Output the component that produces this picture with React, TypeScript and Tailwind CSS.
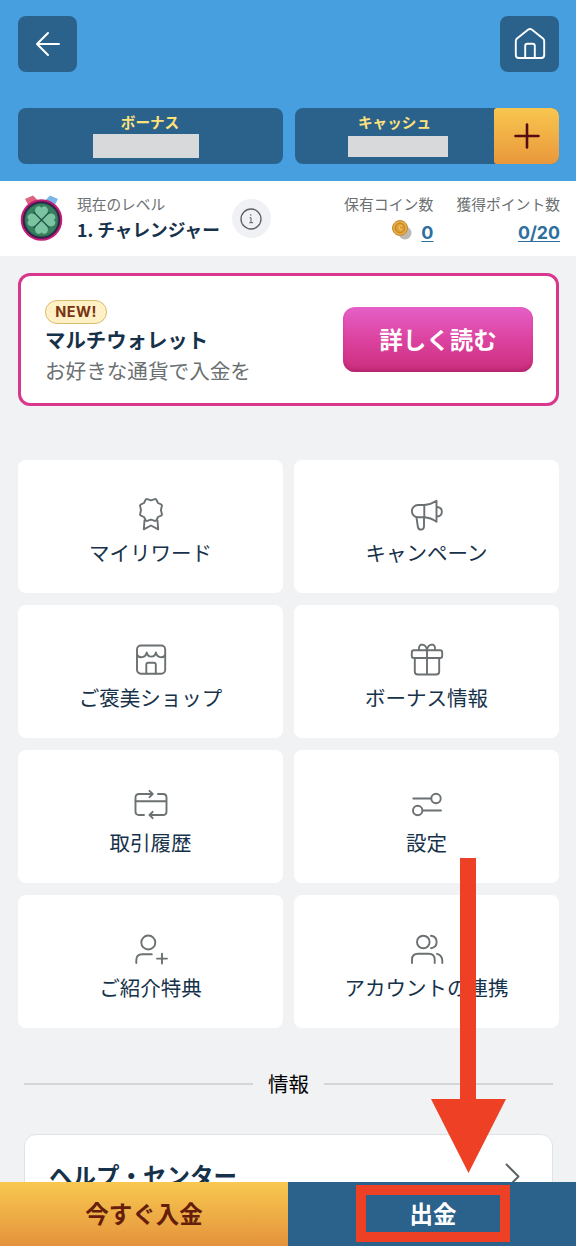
import type { ReactNode } from "react";

function Icon({ children }: { children: ReactNode }) {
  return (
    <svg width="36" height="36" viewBox="0 0 36 36" fill="none" stroke="#6b7072" strokeWidth="1.9" strokeLinecap="round" strokeLinejoin="round">
      {children}
    </svg>
  );
}

const MENU: { label: string; icon: ReactNode }[] = [
  {
    label: "マイリワード",
    icon: (
      <>
        <path d="M18 4.300 21.800 3.100Q23 2.800 23.500 4L25 7l3 1.300q1.200.6.900 1.700l-1 4 1 4q.3 1.100-.9 1.700L25 21l-1.500 3q-.5 1.200-1.700.9L18 23.700l-3.800 1.200q-1.200.3-1.700-.9L11 21l-3-1.300Q6.800 19.100 7.100 18L8 14l-.9-4Q6.800 8.900 8 8.300L11 7l1.500-3q.5-1.200 1.700-.9Z" />
        <path d="M11.500 24.500 10.800 33.300l7.200-3.800 7.200 3.800-.7-8.800" />
      </>
    ),
  },
  {
    label: "キャンペーン",
    icon: (
      <>
        <path d="M15.300 9H9a6.150 6.150 0 0 0 0 12.300h6.300V9Z" />
        <path d="M15.300 9c4.800-.2 8.600-1.800 12.200-4.200v21c-3.600-2.500-7.400-4.200-12.200-4.500" />
        <path d="M28 11c6.500.5 6.500 9 0 9.500M7.500 21.500l1.300 9c.7 4.300 6.200 4 6.200-.2v-9" />
      </>
    ),
  },
  {
    label: "ご褒美ショップ",
    icon: (
      <>
        <rect x="4" y="4.500" width="28.200" height="28.200" rx="4" />
        <path d="M4.300 14c1.700 3.300 8.200 3.300 9.400-2.500 1.200 5.500 8 5.500 9.200 0 1.200 5.800 7.600 5.800 9.200 2.500M13.300 32.500v-8.800q0-2 2-2h5.500q2 0 2 2v8.800" />
      </>
    ),
  },
  {
    label: "ボーナス情報",
    icon: (
      <>
        <rect x="2.800" y="9.300" width="30.400" height="7.700" rx="2" />
        <path d="M5.800 17v13.500q0 3 3 3h18.400q3 0 3-3V17M18 9.300v24.200M18 9.300C17 2 9 1.500 10 8.800M18 9.300c1-7.300 9-7.800 8-.5" />
      </>
    ),
  },
  {
    label: "取引履歴",
    icon: (
      <>
        <path d="M11 29H6q-3.500 0-3.500-3.500v-14Q2.500 8 6 8h13.500M16.500 4.800 19.700 8l-3.200 3.200" />
        <path d="M25 8h5q3.500 0 3.500 3.500v14q0 3.500-3.500 3.500H16.500M19.700 25.800 16.500 29l3.200 3.200M2.500 15.300h31" />
      </>
    ),
  },
  {
    label: "設定",
    icon: (
      <>
        <path d="M4.300 12.500h18M13.500 24.500H32" />
        <circle cx="27" cy="12.500" r="4.700" />
        <circle cx="8.700" cy="24.500" r="4.700" />
      </>
    ),
  },
  {
    label: "ご紹介特典",
    icon: (
      <>
        <circle cx="15.300" cy="11.500" r="7" />
        <path d="M3.300 32v-2.700q0-6 6-6h9.500M24 27.600h10M29 22.600v10" />
      </>
    ),
  },
  {
    label: "アカウントの連携",
    icon: (
      <>
        <circle cx="14.300" cy="11" r="6.300" />
        <path d="M22 4.800c7.500 1.200 7.500 11.200 0 12.400M3 32v-3.200q0-6 6-6h10.700q6 0 6 6V32M28 22.800q5.300 1.400 5.300 7V32" />
      </>
    ),
  },
];

function Medal() {
  return (
    <svg width="44" height="48" viewBox="0 0 44 48">
      <path d="m5 4 8-3.500 5 5-9 6z" fill="#dc647f" />
      <path d="m38 4-8-3.500-5 5 9 6z" fill="#78b8e8" />
      <circle cx="21.500" cy="25" r="19.500" fill="#286b58" stroke="#c51c79" strokeWidth="2.500" />
      <circle cx="21.500" cy="25" r="17.800" fill="none" stroke="#3a2148" strokeWidth="2" />
      <circle cx="21.500" cy="25" r="16" fill="#37805f" />
      <g fill="#7cc3a1" transform="rotate(0 21.500 25)">
        <path id="leaf" d="M21.500 24c-5-3.500-7.500-7-6-10.500 1.500-3 4.500-3 6-.8 1.500-2.200 4.500-2.200 6 .8 1.500 3.500-1 7-6 10.500Z" />
        <use href="#leaf" transform="rotate(90 21.500 25)" />
        <use href="#leaf" transform="rotate(180 21.500 25)" />
        <use href="#leaf" transform="rotate(270 21.500 25)" />
      </g>
      <path d="m13.500 17 16 16m0-16-16 16" stroke="#245c4b" strokeWidth="1.300" />
    </svg>
  );
}

function Header() {
  return (
    <header className="h-[181px] bg-[#489fdf] pt-[16px] pr-[17px] pl-[18px]">
      <div className="flex justify-between">
        <button className="flex h-[56px] w-[59px] items-center justify-center rounded-lg bg-[#2b628c]">
          <svg width="26" height="26" viewBox="0 0 26 26" fill="none" stroke="white" strokeWidth="2" strokeLinecap="round" strokeLinejoin="round">
            <path d="M24 13H2M13 2 2 13l11 11" />
          </svg>
        </button>
        <button className="flex h-[56px] w-[59px] items-center justify-center rounded-lg bg-[#2b628c]">
          <svg width="36" height="36" viewBox="0 0 36 36" fill="none" stroke="white" strokeWidth="1.900" strokeLinecap="round" strokeLinejoin="round">
            <path d="M3.800 15q0-1.500 1.200-2.500L16.300 3.600q1.700-1.300 3.400 0L31 12.500q1.200 1 1.200 2.500v14q0 3-3 3H6.800q-3 0-3-3Z" />
            <path d="M13.200 32V20q0-2.200 2.200-2.200h5.200q2.200 0 2.200 2.200v12" />
          </svg>
        </button>
      </div>
      <div className="mt-[36px] flex gap-[12px]">
        <div className="flex h-[56px] w-[265px] flex-col items-center rounded-lg bg-[#2b628c] pt-[3px] pr-[1px]">
          <span className="text-[14.600px] leading-[22px] font-bold text-[#ffe27a]">ボーナス</span>
          <div className="mt-[1px] mr-[8px] h-[24px] w-[106px] bg-[#d8d9da]" />
        </div>
        <div className="flex h-[56px] w-[264px] overflow-hidden rounded-lg bg-[#2b628c]">
          <div className="flex w-[199px] flex-col items-center pt-[3px]">
            <span className="text-[14.600px] leading-[22px] font-bold text-[#ffe27a]">キャッシュ</span>
            <div className="mt-[3px] ml-[7px] h-[21px] w-[100px] bg-[#d8d9da]" />
          </div>
          <button className="flex flex-1 items-center justify-center rounded-l-[3px] bg-linear-to-b from-[#f8c64f] to-[#e9983b]">
            <svg width="26" height="26" viewBox="0 0 26 26" stroke="#540c12" strokeWidth="2.600" strokeLinecap="round">
              <path d="M13 1.500v23M1.500 13h23" />
            </svg>
          </button>
        </div>
      </div>
    </header>
  );
}

function LevelBar() {
  return (
    <section className="flex h-[75px] bg-white pr-[16px] pl-[20px]">
      <div className="pt-[14px]">
        <Medal />
      </div>
      <div className="ml-[13px] w-[144px] pt-[12px] whitespace-nowrap">
        <p className="text-[14.700px] leading-[21px] text-[#6b7072]">現在のレベル</p>
        <p className="mt-[4px] text-[17.700px] leading-[22px] font-bold text-[#16324a]">1. チャレンジャー</p>
      </div>
      <div className="mt-[18px] ml-[11px] flex size-[39px] items-center justify-center rounded-full bg-[#f0f1f4]">
        <svg className="mr-[2px]" width="22" height="22" viewBox="0 0 22 22" fill="none" stroke="#5b5f63" strokeWidth="1.300">
          <circle cx="11" cy="11" r="10" />
          <path d="M9.700 9.700H11v5M9.300 14.700h3.800" strokeWidth="1" />
          <circle cx="10.800" cy="7" r=".7" fill="#5b5f63" stroke="none" />
        </svg>
      </div>
      <div className="ml-auto flex gap-[23px] pt-[12px] text-right">
        <div>
          <p className="text-[14.900px] leading-[21px] text-[#6b7072]">保有コイン数</p>
          <div className="mt-[8px] flex items-center justify-end gap-[9px]">
            <svg className="-mt-[6px]" width="20" height="20" viewBox="0 0 20 20">
              <circle cx="13" cy="13" r="6.500" fill="#bdb9b5" />
              <circle cx="8" cy="8" r="7.500" fill="#e7ad45" stroke="#c8862d" />
              <circle cx="8" cy="8" r="4.800" fill="#dc9f37" stroke="#bd8129" />
              <path d="M10 6Q7 4.500 7 7.300t3 2.500" fill="none" stroke="#f6cf71" />
            </svg>
            <a className="font-[Inter] text-[18px] leading-[22px] font-bold text-[#2e6f9e] underline underline-offset-2">0</a>
          </div>
        </div>
        <div>
          <p className="text-[14.800px] leading-[21px] text-[#6b7072]">獲得ポイント数</p>
          <a className="mt-[8px] block font-[Inter] text-[17.800px] leading-[22px] font-bold text-[#2e6f9e] underline underline-offset-2">0/20</a>
        </div>
      </div>
    </section>
  );
}

function Banner() {
  return (
    <section className="mt-[17px] flex h-[133px] items-center justify-between rounded-xl border-[3px] border-[#d8378d] bg-white pr-[23px] pl-[24px]">
      <div className="pt-[5px]">
        <span className="flex h-[24px] w-[62px] items-center justify-center rounded-full border-[1.500px] border-[#d9bd68] bg-[#fff1c5] font-[Inter] text-[14.500px] font-bold tracking-[0.400px] text-[#7a3413]">
          NEW!
        </span>
        <h2 className="text-[20.400px] leading-[31px] font-bold text-[#16324a]">マルチウォレット</h2>
        <p className="text-[20.600px] leading-[30px] text-[#6b7072]">お好きな通貨で入金を</p>
      </div>
      <button className="h-[65px] w-[190px] rounded-xl bg-linear-to-b from-[#e55fc8] via-[#dc429f] to-[#cb2d7d] text-[23.500px] font-bold text-white shadow-[inset_0_-4px_4px_-2px_#ae2569]">
        詳しく読む
      </button>
    </section>
  );
}

export default function App() {
  return (
    <div className="relative flex h-[1246px] w-[576px] flex-col overflow-hidden bg-[#f0f2f4] font-['Noto_Sans_CJK_JP',sans-serif]">
      <Header />
      <LevelBar />
      <main className="min-h-0 flex-1 overflow-hidden pr-[17px] pl-[18px]">
        <Banner />
        <div className="mt-[54px] grid grid-cols-2 gap-x-[11px] gap-y-[12px]">
          {MENU.map((item) => (
            <button key={item.label} className="flex h-[133px] flex-col items-center rounded-lg bg-white pt-[36px]">
              <Icon>{item.icon}</Icon>
              <span className="mt-[4px] text-[20.500px] leading-[32px] text-[#16324a]">{item.label}</span>
            </button>
          ))}
        </div>
        <div className="mt-[42px] flex items-center gap-[15px] px-[6px]">
          <div className="h-[2px] flex-1 bg-[#d4d7d9]" />
          <span className="-mt-[2px] text-[20.500px] leading-[30px] text-black">情報</span>
          <div className="h-[2px] flex-1 bg-[#d4d7d9]" />
        </div>
        <div className="mx-[6px] mt-[36px] flex h-[84px] items-center justify-between rounded-xl border border-[#e0e3e5] bg-white pr-[32px] pl-[24px]">
          <span className="text-[23.500px] font-bold text-[#16324a]">ヘルプ・センター</span>
          <svg width="15" height="27" viewBox="0 0 15 27" fill="none" stroke="#5c6468" strokeWidth="2" strokeLinecap="round" strokeLinejoin="round">
            <path d="m1.500 1.500 12 12-12 12" />
          </svg>
        </div>
      </main>
      <footer className="flex h-[64px] shrink-0 text-[23.500px] font-bold">
        <button className="w-1/2 bg-linear-to-b from-[#f8c850] to-[#e4933c] text-[#651e0c]">今すぐ入金</button>
        <button className="w-1/2 bg-[#2b628c] pl-[2px] text-white">出金</button>
      </footer>

      {/* callout pointing at the withdraw button */}
      <svg className="absolute top-[858px] left-[431px]" width="76" height="316" viewBox="0 0 76 316" fill="#ed4024">
        <path d="M29 0h16v241h30l-37.500 74L0 241h29z" />
      </svg>
      <div className="absolute top-[1185px] left-[356px] h-[57px] w-[154px] border-[10px] border-[#ed4024]" />
    </div>
  );
}
